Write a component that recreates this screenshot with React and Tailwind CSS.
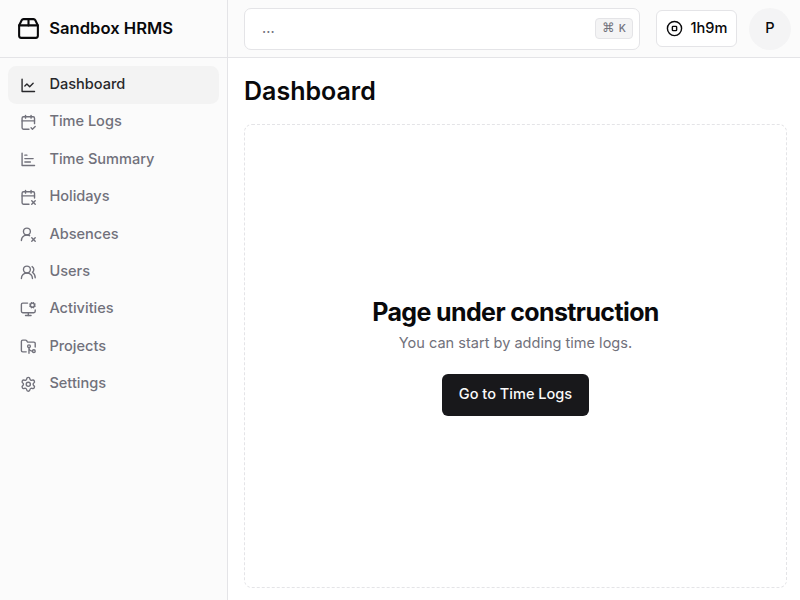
import {
  CalendarCheck2,
  CalendarX2,
  CircleStop,
  Command,
  FolderGit2,
  MonitorCog,
  Package2,
  Settings,
  UserRoundX,
  UsersRound,
} from 'lucide-react';

function ChartIcon({ d, className }) {
  return (
    <svg
      viewBox="0 0 24 24"
      fill="none"
      stroke="currentColor"
      strokeWidth="2"
      strokeLinecap="round"
      strokeLinejoin="round"
      className={className}
    >
      <path d="M3 3v18h18" />
      <path d={d} />
    </svg>
  );
}

const LineChartIcon = (props) => <ChartIcon d="m19 9-5 5-4-4-3 3" {...props} />;
const BarChartIcon = (props) => <ChartIcon d="M7 16h8M7 11h12M7 6h3" {...props} />;

const items = [
  { label: 'Dashboard', icon: LineChartIcon, active: true },
  { label: 'Time Logs', icon: CalendarCheck2 },
  { label: 'Time Summary', icon: BarChartIcon },
  { label: 'Holidays', icon: CalendarX2 },
  { label: 'Absences', icon: UserRoundX },
  { label: 'Users', icon: UsersRound },
  { label: 'Activities', icon: MonitorCog },
  { label: 'Projects', icon: FolderGit2 },
  { label: 'Settings', icon: Settings },
];

function Sidebar() {
  return (
    <aside className="flex w-[228px] shrink-0 flex-col border-r border-zinc-200 bg-[#fbfbfb]">
      <div className="flex h-[58px] shrink-0 items-center gap-[8.3px] border-b border-zinc-200 px-[16px]">
        <Package2 className="size-[25px]" />
        <span className="text-[16.6px] font-semibold">Sandbox HRMS</span>
      </div>
      <nav className="flex flex-col px-[8.3px] pt-[8.3px] text-[14.56px] font-medium">
        {items.map(({ label, icon: Icon, active }) => (
          <a
            key={label}
            className={
              active
                ? 'flex h-[37.4px] items-center gap-[12.5px] rounded-[8.3px] bg-[#f3f3f3] px-[12px] text-zinc-800'
                : 'flex h-[37.4px] items-center gap-[12.5px] rounded-[8.3px] px-[12px] text-zinc-500'
            }
          >
            <Icon className="size-[16.6px]" />
            {label}
          </a>
        ))}
      </nav>
    </aside>
  );
}

function Header() {
  return (
    <header className="flex h-[58px] shrink-0 items-center border-b border-zinc-200 bg-[#fbfbfb] pr-[9px] pl-[16px]">
      <div className="flex h-[42px] flex-1 items-center justify-between rounded-[7px] border border-zinc-200 bg-white pr-[6px] pl-[17px] text-[14.56px] text-zinc-500">
        <span>...</span>
        <kbd className="flex h-[21px] w-[38px] items-center justify-center gap-[4px] rounded-[4px] border border-zinc-200 bg-zinc-100 font-['Inter',sans-serif] text-[10.4px] font-medium">
          <span className="font-['DejaVu_Sans',sans-serif] text-[12.5px] font-normal">⌘</span>K
        </kbd>
      </div>
      <button className="ml-[16px] flex h-[37px] w-[81px] items-center justify-center gap-[8px] rounded-[6px] border border-zinc-200 bg-white text-[14.56px] font-medium">
        <CircleStop className="size-[17px]" />
        1h9m
      </button>
      <div className="ml-[12px] flex size-[42px] items-center justify-center rounded-full bg-zinc-100 text-[14.56px] font-medium">
        P
      </div>
    </header>
  );
}

export default function App() {
  return (
    <div className="flex h-screen w-full overflow-hidden bg-white font-['Inter',sans-serif] text-zinc-950">
      <Sidebar />
      <div className="flex min-w-0 flex-1 flex-col">
        <Header />
        <main className="flex flex-1 flex-col pt-[16px] pr-[13px] pb-[12px] pl-[16px]">
          <h1 className="text-[25px] leading-[35px] font-semibold">Dashboard</h1>
          <section className="mt-[15px] flex flex-1 flex-col items-center justify-center rounded-[8px] border border-dashed border-zinc-200">
            <h2 className="text-[25px] leading-[33px] font-bold tracking-tight">Page under construction</h2>
            <p className="mt-[4px] text-[14.56px] leading-[21px] text-zinc-500">You can start by adding time logs.</p>
            <button className="mt-[20px] flex h-[42px] w-[147px] items-center justify-center rounded-[6px] bg-zinc-900 text-[14.56px] font-medium text-zinc-50">
              Go to Time Logs
            </button>
          </section>
        </main>
      </div>
    </div>
  );
}
